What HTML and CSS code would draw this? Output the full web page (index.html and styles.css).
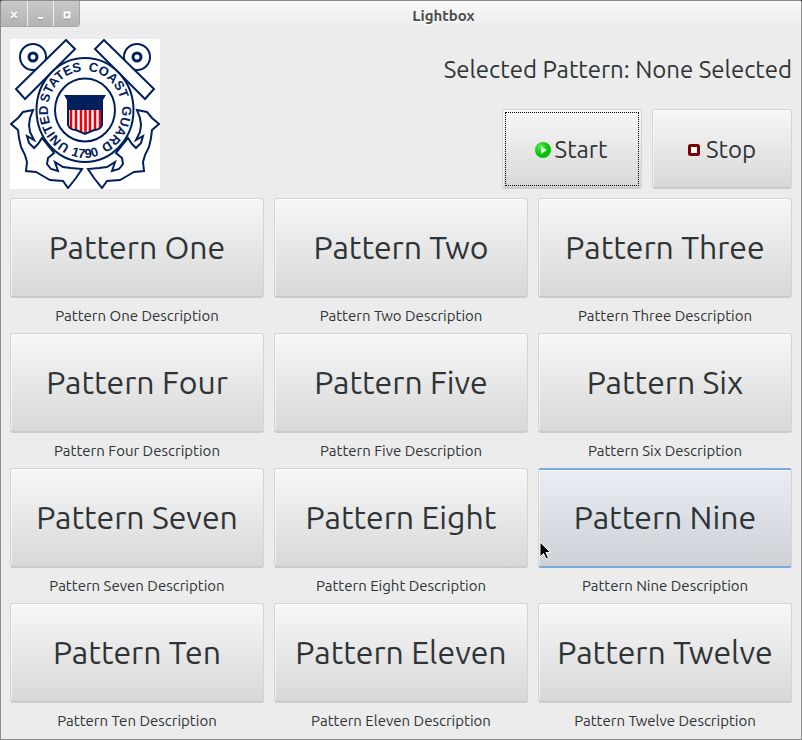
FILE: index.html
```html
<!DOCTYPE html>
<html lang="en">
<head>
<meta charset="utf-8">
<title>Lightbox</title>
<link rel="stylesheet" href="styles.css">
</head>
<body>
<div class="window">
  <header class="titlebar">
    <div class="controls">
      <button class="control" aria-label="Close"><svg width="8" height="8" viewBox="0 0 8 8"><path d="M1 1l6 6M7 1l-6 6" stroke="#f4f4f4" stroke-width="2.2"/></svg></button>
      <button class="control" aria-label="Minimize"><svg width="8" height="8" viewBox="0 0 8 8"><path d="M1 7h5" stroke="#fff" stroke-width="2"/></svg></button>
      <button class="control" aria-label="Maximize"><svg width="8" height="8" viewBox="0 0 8 8"><path d="M1.500 1.500h5v5h-5z" stroke="#fff" stroke-width="2" fill="none"/></svg></button>
    </div>
    <h1 class="title">Lightbox</h1>
  </header>
  <main class="content">
    <section class="top">
      <svg class="logo" viewBox="0 0 150 150" role="img" aria-label="United States Coast Guard 1790">
        <defs>
          <path id="ring-text" pathLength="360" d="M75 110A37 39 0 0 1 75 32A37 39 0 0 1 75 110"/>
          <path id="year-text" d="M50 110Q75 128 100 110"/>
          <g id="anchor">
            <circle cx="23" cy="18" r="13"/>
            <circle cx="23" cy="18" r="4" stroke-width="3"/>
            <path d="M56 1L65 10L15 60L6 50Z"/>
            <path d="M23 71L13 73L8 79L1 85L8 91L9 99L11 108L15 116L17 123L16 132L26 133L33 137L40 141L53 142L58 149L66 139L72 130L61 129L53 128L45 123L48 132L41 130L37 125L38 119L44 114L32 99L28 105L24 109L19 104L17 97L24 101L20 93L19 86L20 79Z"/>
          </g>
        </defs>
        <rect width="150" height="150" fill="#fff"/>
        <g fill="#fff" stroke="#00205c" stroke-width="2">
          <use href="#anchor"/>
          <use href="#anchor" transform="matrix(-1 0 0 1 150 0)"/>
          <ellipse cx="75" cy="71" rx="48.500" ry="52"/>
          <ellipse cx="75" cy="71" rx="30" ry="31.500"/>
        </g>
        <text class="seal-text"><textPath href="#ring-text" startOffset="60">UNITED</textPath></text>
        <text class="seal-text"><textPath href="#ring-text" startOffset="138">STATES</textPath></text>
        <text class="seal-text"><textPath href="#ring-text" startOffset="219">COAST</textPath></text>
        <text class="seal-text"><textPath href="#ring-text" startOffset="300">GUARD</textPath></text>
        <text class="seal-text"><textPath href="#year-text" startOffset="50%">1790</textPath></text>
        <path d="M57 70H93V87Q90 91 84 92L75 95L66 92Q60 91 58 87Z" fill="#fff"/>
        <path d="M61 70V89M66 70V92M71 70V93M75.500 70V95M80 70V93M85 70V92M90 70V89" stroke="#e80010" stroke-width="2.600"/>
        <path d="M58 70V86Q60 91 66 91L75 95L84 91Q90 91 92 86V70" fill="none" stroke="#00205c" stroke-width="2"/>
        <path d="M54 56H96L93 61V71H57V61Z" fill="#00205c"/>
      </svg>
      <div class="panel">
        <p class="selected">Selected Pattern: None Selected</p>
        <div class="actions">
          <button class="button action focused"><svg class="icon" viewBox="0 0 16 16"><defs><radialGradient id="green" cx="35%" cy="30%"><stop offset="0" stop-color="#4df04d"/><stop offset="1" stop-color="#05c005"/></radialGradient></defs><circle cx="8" cy="8" r="8" fill="url(#green)"/><path d="M6 4L12 8L6 12Z" fill="#d8f4d8"/></svg>Start</button>
          <button class="button action"><svg class="icon" viewBox="0 0 16 16"><rect x="3.500" y="3.500" width="9" height="9" rx="1" fill="#fff" stroke="#7c0000" stroke-width="3"/></svg>Stop</button>
        </div>
      </div>
    </section>
    <section class="patterns">
      <div class="pattern"><button class="button">Pattern One</button><p>Pattern One Description</p></div>
      <div class="pattern"><button class="button">Pattern Two</button><p>Pattern Two Description</p></div>
      <div class="pattern"><button class="button">Pattern Three</button><p>Pattern Three Description</p></div>
      <div class="pattern"><button class="button">Pattern Four</button><p>Pattern Four Description</p></div>
      <div class="pattern"><button class="button">Pattern Five</button><p>Pattern Five Description</p></div>
      <div class="pattern"><button class="button">Pattern Six</button><p>Pattern Six Description</p></div>
      <div class="pattern"><button class="button">Pattern Seven</button><p>Pattern Seven Description</p></div>
      <div class="pattern"><button class="button">Pattern Eight</button><p>Pattern Eight Description</p></div>
      <div class="pattern"><button class="button hovered">Pattern Nine</button><p>Pattern Nine Description</p><svg class="cursor" viewBox="0 0 12 19"><path d="M1 1V16L4.500 12.500L7 18L9.500 17L7 11.500H11.500Z" fill="#000" stroke="#fff"/></svg></div>
      <div class="pattern"><button class="button">Pattern Ten</button><p>Pattern Ten Description</p></div>
      <div class="pattern"><button class="button">Pattern Eleven</button><p>Pattern Eleven Description</p></div>
      <div class="pattern"><button class="button">Pattern Twelve</button><p>Pattern Twelve Description</p></div>
    </section>
  </main>
</div>
</body>
</html>
```
FILE: styles.css
```css
* { box-sizing: border-box; }
body { margin: 0; background: #3c4650; color: #2e3436; font-family: Ubuntu, "Noto Sans", sans-serif; }
p, h1 { margin: 0; }
.window { min-height: 100vh; background: #ececec; border: 1px solid #8c8c8c; border-radius: 3px 3px 0 0; }
.titlebar { display: flex; height: 28px; background: linear-gradient(#f9f9f9, #ececec); }
.controls { display: flex; height: 26px; border: 1px solid #a6a6a6; border-width: 0 1px 1px 0; border-radius: 0 0 4px 0; overflow: hidden; }
.control { display: flex; align-items: center; justify-content: center; width: 26px; padding: 2px 0 0; border: 0; background: linear-gradient(#c8caca, #b2b4b4); }
.control svg { filter: drop-shadow(0 1px 0 #909090); }
.control + .control { width: 26px; border-left: 1px solid #eee; }
.title { flex: 1; padding-left: 6px; text-align: center; font-size: 15px; line-height: 30px; color: #4c4c4c; text-shadow: 0 1px #fff; }
.content { padding: 10px 9px 0; }
.top { display: flex; justify-content: space-between; height: 150px; }
.logo { width: 150px; height: 150px; }
.seal-text { font: 700 13px "Liberation Sans", sans-serif; fill: #00205c; text-anchor: middle; }
.panel { display: flex; flex-direction: column; justify-content: space-between; align-items: flex-end; }
.selected { font-size: 24px; line-height: 62px; }
.actions { display: flex; gap: 10px; }
.button { display: flex; align-items: center; justify-content: center; width: 100%; height: 100px; padding: 0 0 2px; border: 1px solid #d4d4d4; border-bottom: 2px solid #cbcbcb; border-radius: 3px; background: linear-gradient(#f7f7f7, #d8d8d8); box-shadow: inset 1px 1px #fff8; color: inherit; font: 32px/40px Ubuntu, "Noto Sans", sans-serif; }
.action { width: 140px; height: 80px; padding: 2px 2px 0 0; gap: 4px; font-size: 24px; }
.focused { outline: 1px dotted #000; outline-offset: -4px; }
.icon { width: 16px; height: 16px; }
.patterns { display: grid; grid-template-columns: repeat(3, 1fr); gap: 0 10px; margin-top: 9px; }
.pattern { position: relative; }
.pattern p { text-align: center; font-size: 15px; line-height: 35px; }
.hovered { background: linear-gradient(#eaeef4, #cdd1d6); border-top: 2px solid #78aadc; border-bottom-color: #78aadc; }
.cursor { position: absolute; left: 1px; top: 73px; width: 12px; height: 19px; }
```
